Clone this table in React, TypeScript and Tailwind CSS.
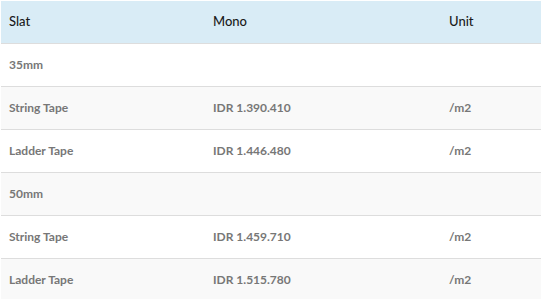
const rows: { slat: string; mono?: string; unit?: string }[] = [
  { slat: "35mm" },
  { slat: "String Tape", mono: "IDR 1.390.410", unit: "/m2" },
  { slat: "Ladder Tape", mono: "IDR 1.446.480", unit: "/m2" },
  { slat: "50mm" },
  { slat: "String Tape", mono: "IDR 1.459.710", unit: "/m2" },
  { slat: "Ladder Tape", mono: "IDR 1.515.780", unit: "/m2" },
];

export default function App() {
  return (
    <div className="bg-white min-h-screen pt-px pl-px" style={{ fontFamily: "Lato, 'Open Sans', sans-serif" }}>
      <div className="w-[540px] text-[12px]">
        <div className="grid grid-cols-[204px_236px_1fr] h-[43px] items-center bg-[#d9ecf6] border-b border-[#dddddd] text-[13px] font-medium text-[#1a1a1a]">
          <div className="px-2">Slat</div>
          <div className="px-2">Mono</div>
          <div className="px-2">Unit</div>
        </div>
        {rows.map((r, i) => (
          <div
            key={i}
            className={
              (i % 2 === 0 ? "bg-white" : "bg-[#f9f9f9]") +
              " grid grid-cols-[204px_236px_1fr] h-[43px] items-center border-b border-[#dddddd] font-bold text-[#777]"
            }
          >
            <div className="px-2">{r.slat}</div>
            <div className="px-2">{r.mono}</div>
            <div className="px-2">{r.unit}</div>
          </div>
        ))}
      </div>
    </div>
  );
}
